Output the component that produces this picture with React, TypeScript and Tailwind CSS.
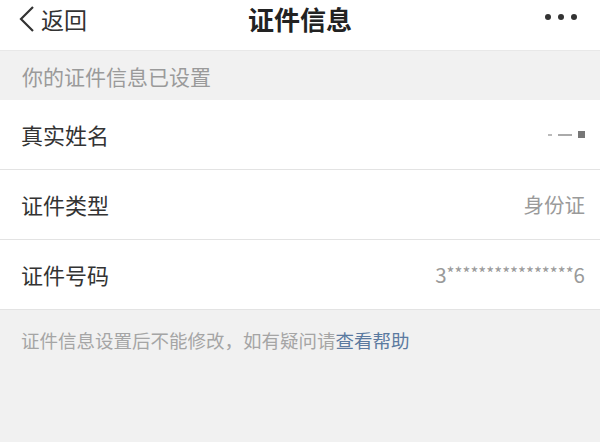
const font = { fontFamily: '"Noto Sans CJK SC", "Noto Sans", sans-serif' };

function Row({ label, children }: { label: string; children: React.ReactNode }) {
  return (
    <div className="flex h-[70px] items-center justify-between border-b border-[#e3e3e3] bg-white pl-[21px] pr-[15px]">
      <span className="text-[22px] text-[#333]">{label}</span>
      <span className="text-[20.5px] text-[#9a9a9a]">{children}</span>
    </div>
  );
}

export default function App() {
  return (
    <main className="h-[442px] w-[600px] overflow-hidden bg-[#f1f1f1]" style={font}>
      <header className="relative flex h-[51px] items-start justify-between border-b border-[#e8e8e8] bg-white px-[18px] pt-[3px]">
        <div className="flex items-center text-[#333]">
          <svg width="18" height="28" viewBox="0 0 18 28" fill="none" stroke="#333" strokeWidth="2.2">
            <path d="M15 2 L3 14 L15 26" />
          </svg>
          <span className="ml-[5px] text-[23px] leading-[32px]">返回</span>
        </div>
        <h1 className="absolute left-1/2 top-[1px] -translate-x-1/2 text-[26px] font-bold leading-[36px] text-[#222]">证件信息</h1>
        <div className="mr-[5px] mt-[11px] flex gap-[7px]">
          <span className="h-[6px] w-[6px] rounded-full bg-[#333]" />
          <span className="h-[6px] w-[6px] rounded-full bg-[#333]" />
          <span className="h-[6px] w-[6px] rounded-full bg-[#333]" />
        </div>
      </header>
      <div className="flex h-[49px] items-center px-[22px] pt-[2px] text-[21px] text-[#9a9a9a]">你的证件信息已设置</div>
      <Row label="真实姓名">
        <span className="flex items-center gap-[6px]">
          <span className="h-[2px] w-[4px] bg-[#bbb]" />
          <span className="h-[2px] w-[14px] bg-[#aaa]" />
          <span className="h-[7px] w-[7px] bg-[#777]" />
        </span>
      </Row>
      <Row label="证件类型">身份证</Row>
      <Row label="证件号码">
        <span className="flex items-start">
          <span>3</span>
          <span className="mt-[1px] text-[17px]">****************</span>
          <span>6</span>
        </span>
      </Row>
      <p className="mt-[17px] px-[21px] text-[18.5px] text-[#a5a5a5]">
        证件信息设置后不能修改，如有疑问请<span className="text-[#5b7aa0]">查看帮助</span>
      </p>
    </main>
  );
}
